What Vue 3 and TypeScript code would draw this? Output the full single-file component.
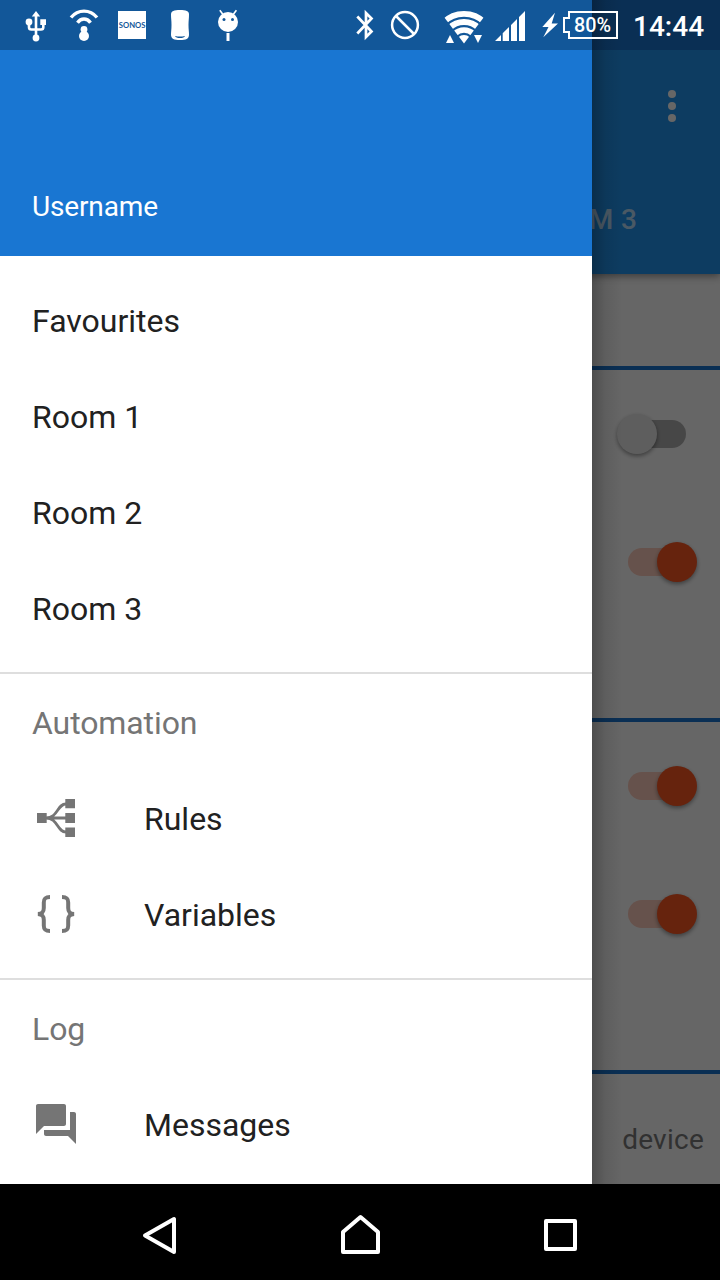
<script setup lang="ts">
interface MenuItem {
  label: string
  icon?: 'rules' | 'variables' | 'messages'
}
interface MenuGroup {
  title?: string
  items: MenuItem[]
}

const groups: MenuGroup[] = [
  { items: [{ label: 'Favourites' }, { label: 'Room 1' }, { label: 'Room 2' }, { label: 'Room 3' }] },
  {
    title: 'Automation',
    items: [
      { label: 'Rules', icon: 'rules' },
      { label: 'Variables', icon: 'variables' },
    ],
  },
  { title: 'Log', items: [{ label: 'Messages', icon: 'messages' }] },
]

const sections: boolean[][] = [
  [false, true],
  [true, true],
]
</script>

<template>
  <div class="screen">
    <div class="app">
      <header class="appbar">
        <div class="toolbar"><i class="dot"></i><i class="dot"></i><i class="dot"></i></div>
        <div class="tab">ROOM 3</div>
      </header>
      <section class="section intro"></section>
      <section v-for="(rows, s) in sections" :key="s" class="section">
        <div v-for="(on, r) in rows" :key="r" class="row">
          <span class="switch" :class="{ on }"><span class="track"></span><span class="knob"></span></span>
        </div>
      </section>
      <div class="row"><span class="device">device</span></div>
    </div>

    <div class="scrim"></div>

    <aside class="drawer">
      <div class="account">Username</div>
      <nav v-for="(g, i) in groups" :key="i" class="group" :class="{ titled: g.title }">
        <div v-if="g.title" class="item title"><span class="label">{{ g.title }}</span></div>
        <div v-for="item in g.items" :key="item.label" class="item">
          <svg v-if="item.icon" class="icon" viewBox="0 0 48 48">
            <g v-if="item.icon === 'rules'">
              <path d="M5 19h9.700v10H5zM33.300 5H43v9.300h-9.700zM33.300 19H43v10h-9.700zM33.300 33.500H43V43h-9.700z" />
              <path class="line thin" d="M14 24h20M14 24c12 0 11-14 20-14M14 24c12 0 11 14 20 14" />
            </g>
            <g v-else-if="item.icon === 'variables'">
              <path class="line" d="M18 7c-4.800 0-6.200 1.600-6.200 5.500v5.500c0 4-1.600 5.600-5.800 6 4.200.4 5.800 2 5.800 6v5.500c0 3.900 1.400 5.500 6.200 5.500" />
              <path class="line" d="M30 7c4.800 0 6.200 1.600 6.200 5.500v5.500c0 4 1.600 5.600 5.800 6-4.200.4-5.800 2-5.800 6v5.500c0 3.900-1.400 5.500-6.200 5.500" />
            </g>
            <path
              v-else
              transform="scale(2)"
              d="M21 6h-2v9H6v2c0 .55.45 1 1 1h11l4 4V7c0-.55-.45-1-1-1zm-4 6V3c0-.55-.45-1-1-1H3c-.55 0-1 .45-1 1v14l4-4h10c.55 0 1-.45 1-1z"
            />
          </svg>
          <span class="label">{{ item.label }}</span>
        </div>
      </nav>
    </aside>

    <div class="status">
      <svg width="48" height="50" viewBox="12 0 48 50">
        <path class="w" d="M36 11l4.200 5.500h-8.400zM40.300 19.200H46V25h-5.700z" />
        <circle class="w" cx="29" cy="22" r="3.400" /><circle class="w" cx="36" cy="38" r="3.400" />
        <path class="s" stroke-width="2.600" d="M36 15v22M29 23v4.200q0 2.300 2.300 2.300h9.700q2.300 0 2.300-2.300V24" />
      </svg>
      <svg width="48" height="50" viewBox="60 0 48 50">
        <path class="s" stroke-width="3.400" d="M71 17.500C78 9 90 9 97 17.500M77.500 22.800c3.500-5 9.500-5 13 0" />
        <circle class="w" cx="84" cy="29.500" r="3.400" /><circle class="w" cx="84" cy="36" r="5" />
      </svg>
      <svg width="48" height="50" viewBox="108 0 48 50">
        <path class="w" d="M118 11h28v28h-28z" />
        <text class="sonos" x="118.800" y="28" textLength="26.700" lengthAdjust="spacingAndGlyphs">SONOS</text>
      </svg>
      <svg width="48" height="50" viewBox="156 0 48 50">
        <path class="w" d="M171 14.500c0-3.500 3-4.500 9-4.500s9 1 9 4.500c0 4-.5 6-.5 10.500s.5 6.500.5 9.500c0 4.500-3 5.500-9 5.500s-9-1-9-5.500c0-3 .5-5 .5-9.500s-.5-6.500-.5-10.500z" />
        <path class="b" d="M175 36q5 1 10 0-1 2-5 2t-5-2z" />
      </svg>
      <svg width="48" height="50" viewBox="204 0 48 50">
        <circle class="w" cx="228" cy="22" r="10" />
        <path class="s" stroke-width="1.600" d="M219.800 10.300l3.400 4.500M236.400 10.300l-3.400 4.500" />
        <path class="w" d="M226.500 33h3v8h-3z" />
        <circle class="b" cx="224" cy="19.500" r="1.500" /><circle class="b" cx="232.500" cy="19.500" r="1.500" />
      </svg>
      <span class="spacer"></span>
      <svg width="36" height="50" viewBox="348 0 36 50">
        <path class="s" stroke-width="2.700" d="M357.300 16.500l14.200 15-5.500 5.500V13l5.500 5.500-14.200 15" />
      </svg>
      <svg width="42" height="50" viewBox="384 0 42 50">
        <circle class="s" stroke-width="2.500" cx="405" cy="25" r="12.900" />
        <path class="s" stroke-width="2.500" d="M396 16l18 18" />
      </svg>
      <svg width="63" height="50" viewBox="426 0 63 50">
        <clipPath id="fan"><path d="M464 43.500L441 13V0h46v13z" /></clipPath>
        <g clip-path="url(#fan)">
          <circle class="s" stroke-width="5.800" cx="464" cy="43" r="29.100" />
          <circle class="s" stroke-width="6" cx="464" cy="43" r="21" />
          <circle class="s" stroke-width="5.600" cx="464" cy="43" r="13" />
          <circle class="w" cx="464" cy="43" r="8" />
        </g>
        <path class="w" d="M450 35l4 8h-8zM474 35h8l-4 8z" />
      </svg>
      <svg width="42" height="50" viewBox="489 0 42 50">
        <path class="w" d="M495 41l6-6v6zM502.700 41v-7.700l6.300-6.300v14zM511 41V25l6-6v22zM519 41V17l6-6v30z" />
      </svg>
      <svg width="30" height="50" viewBox="531 0 30 50">
        <path class="w" d="M555 12.700L542.300 27h6.200l-5.200 10.300L558 23.500h-6.300z" />
      </svg>
      <svg width="60" height="50" viewBox="561 0 60 50">
        <path class="s" stroke-width="2" d="M569 12h48v26h-48v-6h-5V18h5z" />
        <text class="pct" x="574" y="32" textLength="37" lengthAdjust="spacingAndGlyphs">80%</text>
      </svg>
      <span class="clock">14:44</span>
    </div>

    <div class="navbar">
      <svg width="200" height="96" viewBox="60 1184 200 96"><path class="nav" d="M145 1235.500l29-16.500v33z" /></svg>
      <svg width="200" height="96" viewBox="260 1184 200 96"><path class="nav" d="M343 1252v-20l17.500-15 17.500 15v20z" /></svg>
      <svg width="200" height="96" viewBox="460 1184 200 96"><path class="nav" d="M546 1221h29v28h-29z" /></svg>
    </div>
  </div>
</template>

<style>
body {
  background: #000;
}
</style>

<style scoped>
.screen {
  position: relative;
  width: 720px;
  height: 1280px;
  overflow: hidden;
  font-family: Roboto, "Noto Sans", sans-serif;
  background: #000;
}
.app {
  height: 1184px;
  overflow: hidden;
  background: #fff;
}
.appbar {
  position: relative;
  box-sizing: border-box;
  height: 274px;
  border-top: 50px solid #1976d2;
  background: #2196f3;
  box-shadow: 0 2px 8px rgba(0, 0, 0, 0.45);
}
.toolbar {
  display: flex;
  flex-direction: column;
  align-items: flex-end;
  justify-content: center;
  gap: 4px;
  height: 112px;
  padding-right: 44px;
}
.dot {
  width: 8px;
  height: 8px;
  border-radius: 50%;
  background: #fff;
}
.tab {
  height: 112px;
  padding-right: 83px;
  line-height: 115px;
  font-size: 28px;
  font-weight: 500;
  text-align: right;
  word-spacing: 1px;
  color: rgba(255, 255, 255, 0.7);
}
.section {
  box-sizing: border-box;
  height: 352px;
  border-bottom: 4px solid #1976d2;
}
.intro {
  height: 96px;
}
.row {
  display: flex;
  align-items: center;
  justify-content: flex-end;
  height: 128px;
  padding-right: 16px;
}
.switch {
  display: flex;
  align-items: center;
  width: 87px;
}
.track {
  width: 58px;
  height: 28px;
  margin-left: 11px;
  border-radius: 14px;
  background: #b2b2b2;
}
.knob {
  width: 40px;
  height: 40px;
  margin-left: -69px;
  border-radius: 50%;
  background: #ececec;
  box-shadow: 0 2px 4px rgba(0, 0, 0, 0.4);
}
.on .track {
  background: #ffcdbd;
}
.on .knob {
  margin-left: -29px;
  background: #ff5722;
}
.device {
  padding-top: 2px;
  font-size: 28px;
  letter-spacing: 0.25px;
  color: #7c7c7c;
}
.scrim {
  position: absolute;
  inset: 0 0 96px;
  background: rgba(0, 0, 0, 0.6);
}
.drawer {
  position: absolute;
  top: 0;
  left: 0;
  width: 592px;
  height: 1184px;
  background: #fff;
  color: #212121;
  font-size: 32px;
}
.drawer::after {
  content: "";
  position: absolute;
  top: 0;
  left: 100%;
  width: 30px;
  height: 100%;
  background: linear-gradient(90deg, rgba(0, 0, 0, 0.24), rgba(0, 0, 0, 0.08) 45%, transparent);
}
.account {
  display: flex;
  align-items: flex-end;
  box-sizing: border-box;
  height: 256px;
  padding: 0 32px 32px;
  border-top: 50px solid #125799;
  background: #1976d2;
  color: #fff;
  font-size: 28px;
  letter-spacing: -0.15px;
  line-height: 34px;
}
.group {
  padding: 16px 0;
}
.titled {
  padding-top: 0;
  border-top: 2px solid #dedede;
}
.item {
  display: flex;
  align-items: center;
  height: 96px;
  padding: 0 32px;
}
.label {
  padding-top: 2px;
}
.title {
  color: #757575;
  letter-spacing: -0.1px;
}
.icon {
  width: 48px;
  height: 48px;
  margin-right: 64px;
  fill: #757575;
}
.line {
  fill: none;
  stroke: #757575;
  stroke-width: 4;
}
.thin {
  stroke-width: 2.8;
}
.status {
  position: absolute;
  top: 0;
  left: 0;
  display: flex;
  width: 708px;
  height: 50px;
  padding-left: 12px;
}
.status svg {
  flex: none;
}
.spacer {
  width: 96px;
}
.clock {
  margin-left: 12px;
  font-size: 28px;
  font-weight: 500;
  line-height: 53px;
  color: #fff;
}
.w {
  fill: #fff;
}
.b {
  fill: #125799;
}
.s {
  fill: none;
  stroke: #fff;
}
.sonos {
  font: 700 7.5px Lato, sans-serif;
  fill: #125799;
}
.pct {
  font-size: 20.5px;
  font-weight: 500;
  fill: #fff;
}
.navbar {
  display: flex;
  justify-content: center;
  height: 96px;
  background: #000;
}
.nav {
  fill: none;
  stroke: #fff;
  stroke-width: 4;
  stroke-linejoin: round;
}
</style>
